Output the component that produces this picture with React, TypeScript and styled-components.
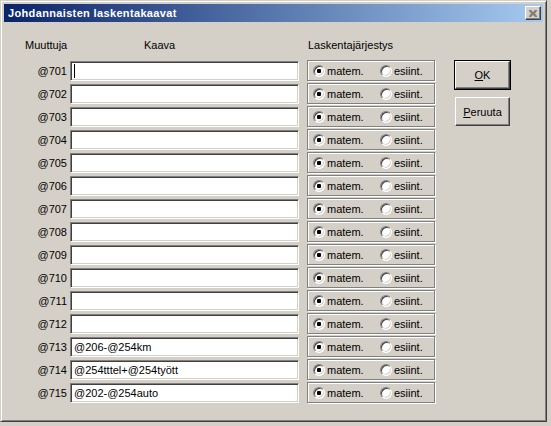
import React from 'react';
import styled, { createGlobalStyle } from 'styled-components';

const Global = createGlobalStyle`
  html, body { margin: 0; padding: 0; background: #d4d0c8; }
  body { font-family: "Liberation Sans", Arial, sans-serif; font-size: 11px; color: #000; }
  * { box-sizing: border-box; }
`;

const Window = styled.div`
  width: 547px;
  height: 422px;
  background: #d4d0c8;
  border: 1px solid;
  border-color: #d4d0c8 #404040 #404040 #d4d0c8;
  box-shadow: inset 1px 1px 0 #fff, inset -1px -1px 0 #808080;
  padding: 3px;
  display: flex;
  flex-direction: column;
`;

const TitleBar = styled.div`
  height: 18px;
  margin-bottom: 1px;
  background: linear-gradient(to right, #0a246a, #a6caf0);
  display: flex;
  align-items: center;
  justify-content: space-between;
  padding: 0 2px 0 4px;
`;

const Title = styled.span`
  color: #fff;
  font-weight: bold;
  font-size: 11px;
  letter-spacing: 0.35px;
`;

const CloseBtn = styled.div`
  width: 16px;
  height: 14px;
  background: #d4d0c8;
  border: 1px solid;
  border-color: #fff #404040 #404040 #fff;
  box-shadow: inset -1px -1px 0 #808080;
  display: flex;
  align-items: center;
  justify-content: center;
`;

const Client = styled.div`
  flex: 1;
  display: flex;
  padding-top: 16px;
`;

const Form = styled.div`
  display: flex;
  flex-direction: column;
`;

const HeaderRow = styled.div`
  display: flex;
  height: 13px;
  line-height: 13px;
  margin-bottom: 8px;
`;

const HeadCell = styled.span<{ $w: number; $pl: number }>`
  width: ${(p) => p.$w}px;
  padding-left: ${(p) => p.$pl}px;
`;

const Row = styled.div`
  display: flex;
  align-items: flex-start;
  height: 23px;
`;

const VarLabel = styled.span`
  width: 63px;
  margin-right: 3px;
  margin-top: 1px;
  height: 20px;
  line-height: 20px;
  text-align: right;
`;

const Field = styled.div`
  width: 229px;
  height: 20px;
  margin-top: 1px;
  margin-right: 8px;
  background: #fff;
  border: 1px solid;
  border-color: #808080 #fff #fff #808080;
  box-shadow: inset 1px 1px 0 #404040, inset -1px -1px 0 #d4d0c8;
  padding: 0 3px;
  line-height: 18px;
  white-space: nowrap;
  overflow: hidden;
  display: flex;
  align-items: center;
`;

const Caret = styled.span`
  width: 1px;
  height: 14px;
  background: #000;
`;

const Group = styled.div`
  width: 128px;
  height: 21px;
  border: 1px solid #808080;
  box-shadow: inset 1px 1px 0 #fff, 1px 1px 0 #fff;
  display: flex;
  align-items: center;
  padding-left: 5px;
`;

const Option = styled.label<{ $w: number }>`
  width: ${(p) => p.$w}px;
  display: flex;
  align-items: center;
  gap: 2px;
`;

const RadioCircle = styled.span<{ $on: boolean }>`
  width: 12px;
  height: 12px;
  border-radius: 50%;
  background: #fff;
  border: 1px solid;
  border-color: #808080 #fff #fff #808080;
  box-shadow: inset 1px 1px 0 #404040, inset -1px -1px 0 #d4d0c8;
  display: flex;
  align-items: center;
  justify-content: center;
  &::after {
    content: '';
    width: 4px;
    height: 4px;
    border-radius: 1px;
    background: ${(p) => (p.$on ? '#000' : 'transparent')};
  }
`;

const ButtonCol = styled.div`
  display: flex;
  flex-direction: column;
  align-items: flex-start;
  padding-top: 21px;
  padding-left: 19px;
`;

const DefaultFrame = styled.div`
  border: 1px solid #000;
  margin-bottom: 7px;
`;

const Button = styled.div<{ $default?: boolean }>`
  width: 55px;
  height: ${(p) => (p.$default ? 28 : 29)}px;
  margin-left: ${(p) => (p.$default ? 0 : 1)}px;
  background: #d4d0c8;
  border: 1px solid;
  border-color: #fff #404040 #404040 #fff;
  box-shadow: inset -1px -1px 0 #808080, inset 1px 1px 0 #d4d0c8;
  display: flex;
  align-items: center;
  justify-content: center;
`;

const U = styled.span`
  text-decoration: underline;
`;

const rows: { v: string; f: string }[] = [
  { v: '@701', f: '' },
  { v: '@702', f: '' },
  { v: '@703', f: '' },
  { v: '@704', f: '' },
  { v: '@705', f: '' },
  { v: '@706', f: '' },
  { v: '@707', f: '' },
  { v: '@708', f: '' },
  { v: '@709', f: '' },
  { v: '@710', f: '' },
  { v: '@711', f: '' },
  { v: '@712', f: '' },
  { v: '@713', f: '@206-@254km' },
  { v: '@714', f: '@254tttel+@254tyött' },
  { v: '@715', f: '@202-@254auto' },
];

export default function App() {
  return (
    <>
      <Global />
      <Window>
        <TitleBar>
          <Title>Johdannaisten laskentakaavat</Title>
          <CloseBtn>
            <svg width="8" height="7" viewBox="0 0 8 7">
              <path d="M0 0h2l2 2 2-2h2v1L6 3.5 8 6v1H6L4 5 2 7H0V6l2-2.5L0 1z" fill="#808080" />
            </svg>
          </CloseBtn>
        </TitleBar>
        <Client>
          <Form>
            <HeaderRow>
              <HeadCell $w={66} $pl={21}>Muuttuja</HeadCell>
              <HeadCell $w={237} $pl={74}>Kaava</HeadCell>
              <HeadCell $w={128} $pl={1}>Laskentajärjestys</HeadCell>
            </HeaderRow>
            {rows.map((r, i) => (
              <Row key={r.v}>
                <VarLabel>{r.v}</VarLabel>
                <Field>{i === 0 ? <Caret /> : r.f}</Field>
                <Group>
                  <Option $w={67}>
                    <RadioCircle $on />
                    matem.
                  </Option>
                  <Option $w={50}>
                    <RadioCircle $on={false} />
                    esiint.
                  </Option>
                </Group>
              </Row>
            ))}
          </Form>
          <ButtonCol>
            <DefaultFrame>
              <Button $default>
                <U>O</U>K
              </Button>
            </DefaultFrame>
            <Button>
              <U>P</U>eruuta
            </Button>
          </ButtonCol>
        </Client>
      </Window>
    </>
  );
}
